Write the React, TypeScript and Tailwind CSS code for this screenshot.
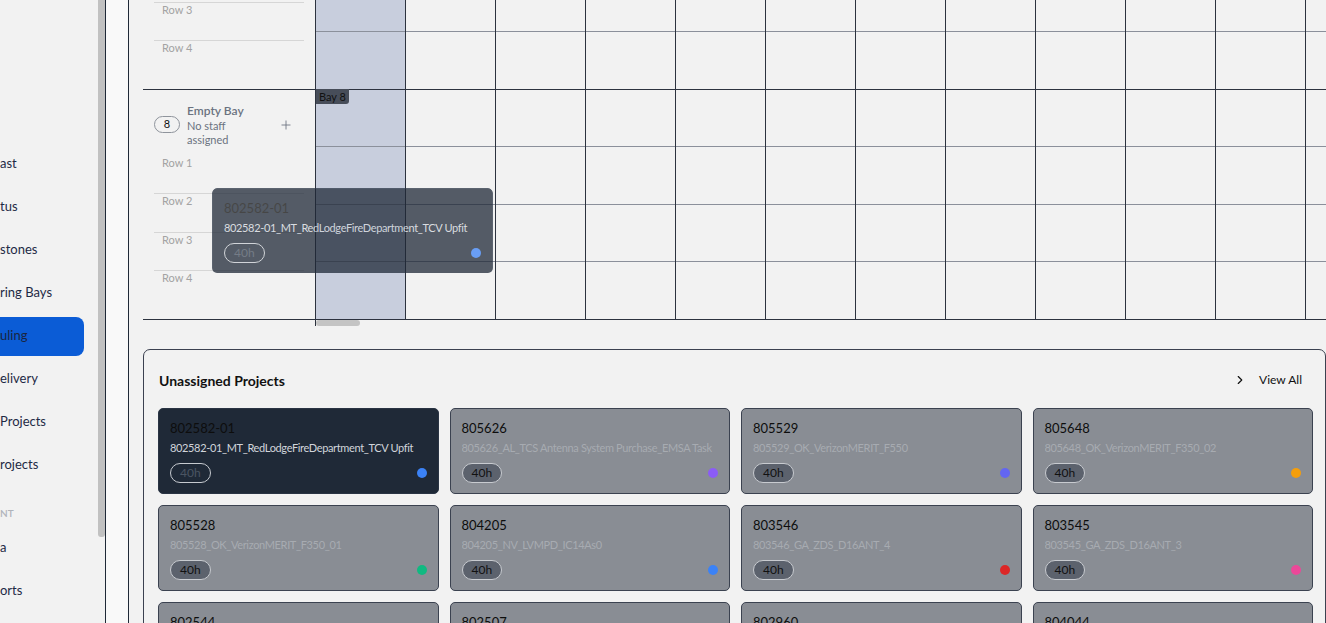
import { ChevronRight, Plus } from "lucide-react";

type Card = { id: string; name: string; color: string; selected?: boolean };

const cards: Card[] = [
  { id: "802582-01", name: "802582-01_MT_RedLodgeFireDepartment_TCV Upfit", color: "#3b82f6", selected: true },
  { id: "805626", name: "805626_AL_TCS Antenna System Purchase_EMSA Task", color: "#8b5cf6" },
  { id: "805529", name: "805529_OK_VerizonMERIT_F550", color: "#6366f1" },
  { id: "805648", name: "805648_OK_VerizonMERIT_F350_02", color: "#f59e0b" },
  { id: "805528", name: "805528_OK_VerizonMERIT_F350_01", color: "#10b981" },
  { id: "804205", name: "804205_NV_LVMPD_IC14As0", color: "#3b82f6" },
  { id: "803546", name: "803546_GA_ZDS_D16ANT_4", color: "#dc2626" },
  { id: "803545", name: "803545_GA_ZDS_D16ANT_3", color: "#ec4899" },
  { id: "802544", name: "802544_GA_ZDS_D16ANT_2", color: "#3b82f6" },
  { id: "802507", name: "802507_GA_ZDS_D16ANT_1", color: "#10b981" },
  { id: "802960", name: "802960_TX_HarrisCounty_Upfit", color: "#f59e0b" },
  { id: "804044", name: "804044_CA_LAFD_Command", color: "#8b5cf6" },
];

function ProjectCard({ c, ghost }: { c: Card; ghost?: boolean }) {
  const sel = c.selected;
  return (
    <div
      className={
        "h-[86px] rounded-[5px] border pl-[11px] pr-[11px] pt-[10px] flex flex-col " +
        (sel ? "bg-[#1f2937] border-[#2a3444]" : "bg-[#898d94] border-[#3b4250]") +
        (ghost ? " opacity-75" : "")
      }
    >
      <div className="text-[13px] leading-[18px] text-[#0d0d0d]">{c.id}</div>
      <div
        className={
          "mt-[3px] text-[11px] leading-[16px] tracking-[-0.35px] whitespace-nowrap overflow-hidden " +
          (sel ? "text-[#d1d5db]" : "text-[#a7abb1]")
        }
      >
        {c.name}
      </div>
      <div className="mt-[7px] flex items-center justify-between">
        <div
          className={
            "h-[20px] px-[9px] rounded-full border flex items-center text-[12px] " +
            (sel ? "border-[#c6cad0] text-[#4b5563]" : "bg-[#5c626d] border-[#c8cbd0] text-[#111111]")
          }
        >
          40h
        </div>
        <div className="w-[10px] h-[10px] rounded-full" style={{ backgroundColor: c.color }} />
      </div>
    </div>
  );
}

const COLS = Array.from({ length: 12 }, (_, i) => i);

function Bay({ num, rows, tag }: { num: string; rows: string[]; tag?: boolean }) {
  return (
    <div className="flex border-t border-[#2d333f]">
      <div className="w-[172px] shrink-0 flex flex-col pt-[12px]">
        <div className="h-[45px] flex items-center pl-[11px] pr-[22px]">
          <div className="w-[26px] h-[17px] rounded-full border border-[#8f949c] flex items-center justify-center text-[11px] text-[#111111]">
            {num}
          </div>
          <div className="ml-[7px] w-[75px] flex flex-col">
            <div className="text-[12px] leading-[16px] font-semibold text-[#6b7280]">Empty Bay</div>
            <div className="text-[11px] leading-[14px] text-[#6b7280]">No staff assigned</div>
          </div>
          <div className="flex-1" />
          <Plus size={14} strokeWidth={1.5} className="text-[#6b7280]" />
        </div>
        <div className="mt-[7.5px] flex flex-col">
          {rows.map((r, i) => (
            <div
              key={r}
              className={
                "h-[38.5px] mx-[11px] border-t pl-[8px] text-[11px] leading-[13px] text-[#a3a3a3] " +
                (i === 0 ? "border-transparent" : "border-[#d6d6d6]")
              }
            >
              {r}
            </div>
          ))}
        </div>
      </div>
      <div className="flex">
        {COLS.map((i) => (
          <div
            key={i}
            className={
              "relative w-[90px] shrink-0 border-l border-[#2d333f] flex flex-col " +
              (i === 0 ? "bg-[#c8cedd]" : "")
            }
          >
            {i === 0 && tag && (
              <div className="absolute left-0 top-[-1px] h-[15px] px-[3px] bg-[#474d59] rounded-br-[3px] text-[11px] leading-[15px] text-[#111111]">
                Bay {num}
              </div>
            )}
            <div className="h-[56px]" />
            <div className="h-[58px] border-t border-[#8b909b]" />
            <div className="h-[57px] border-t border-[#8b909b]" />
            <div className="h-[58px] border-t border-[#8b909b]" />
          </div>
        ))}
      </div>
    </div>
  );
}

const nav = ["ast", "tus", "stones", "ring Bays", "uling", "elivery", "Projects", "rojects"];

export default function App() {
  return (
    <div className="flex w-[1326px] h-[623px] overflow-hidden bg-[#f2f2f2] font-['Lato','Noto_Sans',sans-serif]">
      {/* Sidebar */}
      <div className="w-[98px] shrink-0 overflow-hidden pt-[144.5px] flex flex-col gap-[4px]">
        {nav.map((t) => (
          <div
            key={t}
            className={
              "h-[39px] shrink-0 flex items-center text-[13px] whitespace-nowrap " +
              (t === "uling" ? "w-[84px] bg-[#0b5cd6] rounded-r-[8px] text-[#1a2540]" : "text-[#1e2a45]")
            }
          >
            {t}
          </div>
        ))}
        <div className="mt-[17.5px] h-[14px] shrink-0 text-[10px] leading-[14px] font-semibold text-[#b0b4bb]">NT</div>
        <div className="mt-[4.5px] h-[39px] shrink-0 flex items-center text-[13px] text-[#1e2a45]">a</div>
        <div className="h-[39px] shrink-0 flex items-center text-[13px] text-[#1e2a45]">orts</div>
      </div>
      {/* sidebar scrollbar */}
      <div className="w-[7px] shrink-0">
        <div className="h-[537px] bg-[#c1c1c1] rounded-b-[3px]" />
      </div>
      {/* strip */}
      <div className="w-[24px] shrink-0 border-x border-[#1f2937] bg-[#f9f9f9]" />
      {/* Main */}
      <div className="w-[1197px] shrink-0 pl-[14px] flex flex-col overflow-hidden">
        <div className="relative w-[1183px] h-[326px] shrink-0 overflow-hidden">
          <div className="-mt-[141px] flex flex-col">
            <Bay num="7" rows={["Row 1", "Row 2", "Row 3", "Row 4"]} />
            <Bay num="8" rows={["Row 1", "Row 2", "Row 3", "Row 4"]} tag />
            <div className="flex border-t border-[#2d333f] h-[7px]">
              <div className="w-[172px] shrink-0" />
              <div className="border-l border-[#2d333f] flex-1">
                <div className="w-[44px] h-[6px] rounded-full bg-[#c4c4c4]" />
              </div>
            </div>
          </div>
          <div className="absolute left-[69px] top-[188px] w-[281px] h-[85px] overflow-hidden rounded-[5px]">
            <ProjectCard c={cards[0]} ghost />
          </div>
        </div>

        <div className="mt-[23px] w-[1183px] shrink-0 border border-[#3b4150] rounded-[7px] pl-[14px] pr-[12px] pt-[20px] flex flex-col">
          <div className="h-[20px] flex items-center justify-between">
            <div className="text-[14px] font-bold text-[#111111] pl-[1px]">Unassigned Projects</div>
            <div className="flex items-center gap-[12px] pr-[11px] text-[12px] text-[#111111]">
              <ChevronRight size={14} strokeWidth={2} />
              <span>View All</span>
            </div>
          </div>
          <div className="mt-[18px] grid grid-cols-4 gap-[11px]">
            {cards.map((c) => (
              <ProjectCard key={c.id} c={c} />
            ))}
          </div>
        </div>
      </div>
    </div>
  );
}
